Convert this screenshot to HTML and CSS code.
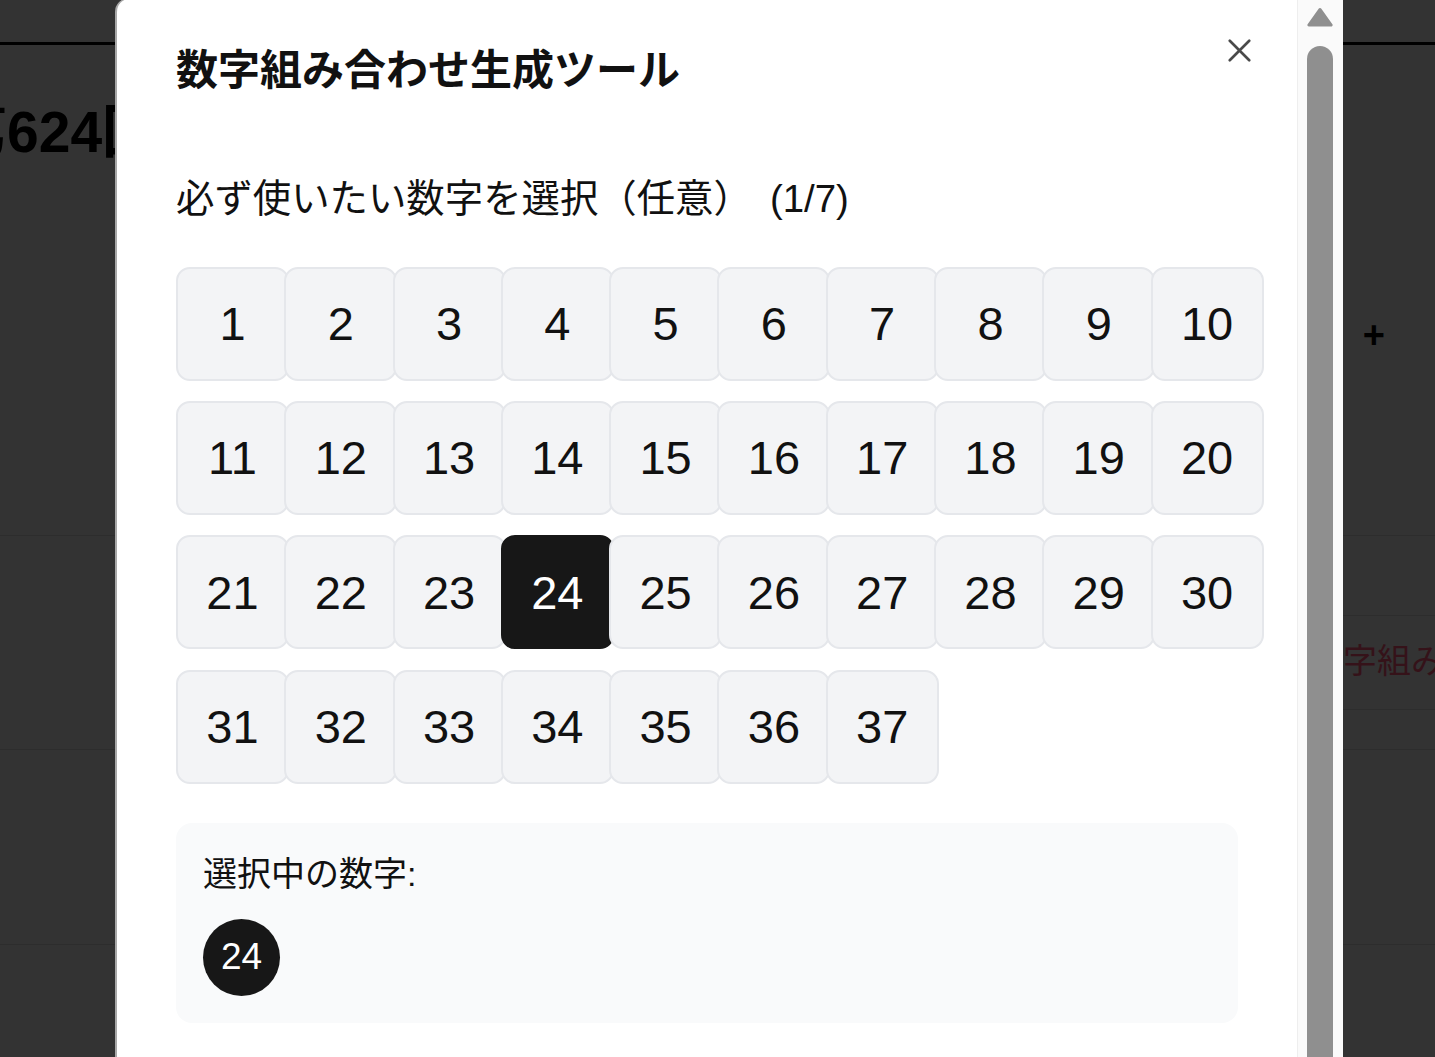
FILE: index.html
```html
<!DOCTYPE html>
<html lang="ja">
<head>
<meta charset="utf-8">
<title>数字組み合わせ生成ツール</title>
<link rel="stylesheet" href="styles.css">
</head>
<body>
<div class="page">
  <div class="topbar"></div>
  <div class="hero">
    <h1 class="draw-title">第624回</h1>
    <div class="hero-actions"><span class="plus">+</span></div>
  </div>
  <div class="section s1"></div>
  <div class="section s2"><div class="combo-link">数字組み合わせ</div></div>
  <div class="section s3"></div>
  <div class="section s4"></div>
  <div class="section s5"></div>
</div>

<div class="modal">
  <div class="modal-main">
    <div class="modal-header">
      <h2 class="modal-title">数字組み合わせ生成ツール</h2>
      <button class="close" aria-label="閉じる">
        <svg width="26" height="26" viewBox="0 0 26 26"><path d="M2 2 L24 24 M24 2 L2 24" stroke="#4a4a4a" stroke-width="3" stroke-linecap="round" fill="none"/></svg>
      </button>
    </div>
    <p class="subtitle">必ず使いたい数字を選択（任意）<span class="count">(1/7)</span></p>
    <div class="grid">
      <button class="cell">1</button><button class="cell">2</button><button class="cell">3</button><button class="cell">4</button><button class="cell">5</button><button class="cell">6</button><button class="cell">7</button><button class="cell">8</button><button class="cell">9</button><button class="cell">10</button>
      <button class="cell">11</button><button class="cell">12</button><button class="cell">13</button><button class="cell">14</button><button class="cell">15</button><button class="cell">16</button><button class="cell">17</button><button class="cell">18</button><button class="cell">19</button><button class="cell">20</button>
      <button class="cell">21</button><button class="cell">22</button><button class="cell">23</button><button class="cell selected">24</button><button class="cell">25</button><button class="cell">26</button><button class="cell">27</button><button class="cell">28</button><button class="cell">29</button><button class="cell">30</button>
      <button class="cell">31</button><button class="cell">32</button><button class="cell">33</button><button class="cell">34</button><button class="cell">35</button><button class="cell">36</button><button class="cell">37</button>
    </div>
    <div class="selected-box">
      <div class="selected-label">選択中の数字:</div>
      <div class="chips"><span class="chip">24</span></div>
    </div>
  </div>
  <div class="scrollbar">
    <svg class="arrow" width="26" height="21" viewBox="0 0 26 21"><path d="M13 2.5 L24.5 18.5 L1.5 18.5 Z" fill="#8f8f8f" stroke="#8f8f8f" stroke-width="3" stroke-linejoin="round"/></svg>
    <div class="thumb"></div>
  </div>
</div>
</body>
</html>
```
FILE: styles.css
```css
* { box-sizing: border-box; }
html, body { margin: 0; padding: 0; }
body {
  width: 1435px;
  height: 1057px;
  overflow: hidden;
  background: #333333;
  font-family: "Liberation Sans", "Noto Sans CJK JP", sans-serif;
  color: #111;
  position: relative;
}

/* background page (dimmed) */
.page { width: 1435px; }
.topbar {
  height: 45px;
  border-bottom: 3px solid #000;
}
.hero {
  height: 491px;
  border-bottom: 1px solid #2d2d2d;
}
.draw-title {
  margin: 0;
  margin-left: -50px;
  padding-top: 47px;
  font-size: 57px;
  line-height: 80px;
  font-weight: bold;
  color: #000;
  white-space: nowrap;
}
.hero-actions {
  display: flex;
  justify-content: flex-end;
  padding-right: 50px;
  margin-top: 143px;
}
.plus {
  font-size: 38px;
  font-weight: bold;
  color: #000;
  line-height: 40px;
}
.section { border-bottom: 1px solid #2d2d2d; }
.s1 { height: 79px; border-bottom: none; }
.s2 {
  height: 135px;
  display: flex;
  flex-direction: column;
  align-items: flex-end;
}
.combo-link {
  width: 300px;
  margin-right: -174px;
  height: 95px;
  border-top: 1px solid #2d2d2d;
  border-bottom: 1px solid #2d2d2d;
  font-size: 34px;
  line-height: 90px;
  color: #351219;
  white-space: nowrap;
}
.s3 { height: 195px; }
.s4 { height: 120px; border-bottom: none; }

/* modal */
.modal {
  position: absolute;
  left: 115px;
  top: -2px;
  width: 1228px;
  height: 1120px;
  background: #fff;
  border-left: 2px solid #a8a8a8;
  border-top: 1px solid #a8a8a8;
  border-radius: 14px 0 0 0;
  display: flex;
  overflow: hidden;
}
.modal-main {
  flex: 1;
  padding: 0 59px 0 59px;
}
.modal-header {
  display: flex;
  justify-content: space-between;
  align-items: flex-start;
  padding-top: 47px;
}
.modal-title {
  margin: 0;
  font-size: 42px;
  line-height: 50px;
  font-weight: bold;
  color: #111;
}
.close {
  width: 34px;
  height: 34px;
  margin-top: -13px;
  margin-right: -18px;
  padding: 0;
  border: none;
  background: none;
  display: flex;
  align-items: center;
  justify-content: center;
}
.close svg { width: 23px; height: 23px; }
.subtitle {
  margin: 74px 0 0 0;
  font-size: 38.4px;
  line-height: 57.6px;
  color: #111;
  white-space: nowrap;
}
.count { margin-left: 18px; }
.grid {
  margin-top: 39px;
  display: grid;
  grid-template-columns: repeat(10, 87.6px);
  grid-auto-rows: 114px;
  column-gap: 20.7px;
  row-gap: 20.4px;
}
.cell {
  width: 113px;
  height: 114px;
  padding: 0;
  background: #f3f4f6;
  border: 2px solid #e5e7eb;
  border-radius: 14px;
  font-family: "Liberation Sans", sans-serif;
  font-size: 47px;
  color: #111;
  display: flex;
  align-items: center;
  justify-content: center;
}
.cell.selected {
  background: #171717;
  border-color: #171717;
  color: #fff;
}
.selected-box {
  margin-top: 39px;
  background: #f9fafb;
  border-radius: 16px;
  padding: 26px 28px 27px 27px;
}
.selected-label {
  font-size: 34px;
  line-height: 51px;
  color: #111;
}
.chips {
  display: flex;
  gap: 14px;
  margin-top: 19px;
}
.chip {
  width: 77px;
  height: 77px;
  border-radius: 50%;
  background: #171717;
  color: #fff;
  font-size: 37px;
  display: flex;
  align-items: center;
  justify-content: center;
}

/* scrollbar */
.scrollbar {
  width: 46px;
  flex: none;
  background: #fafafa;
  border-left: 1px solid #eeeeee;
  display: flex;
  flex-direction: column;
  align-items: center;
  padding-top: 8px;
}
.arrow { display: block; margin-left: -2px; }
.thumb {
  margin-top: 19px;
  margin-left: -2px;
  width: 26px;
  height: 1100px;
  border-radius: 13px;
  background: #8f8f8f;
}
```
